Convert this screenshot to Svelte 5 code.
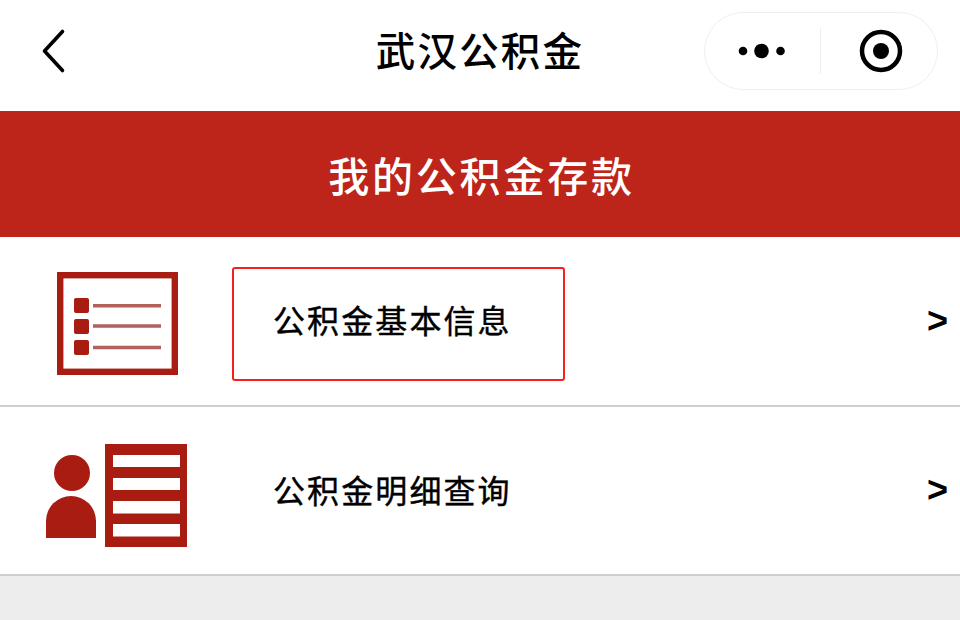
<script>
  const rows = [
    { label: '公积金基本信息', icon: 'list', outlined: true },
    { label: '公积金明细查询', icon: 'person', outlined: false }
  ];
</script>

<div class="page">
  <header class="nav">
    <svg class="back" width="30" height="48" viewBox="0 0 30 48">
      <path d="M23.5 4.5 L5.5 24 L23.5 43.5" fill="none" stroke="#000" stroke-width="3.6" stroke-linecap="round" stroke-linejoin="round" />
    </svg>
    <h1>武汉公积金</h1>
    <div class="capsule">
      <svg class="dots" width="48" height="20" viewBox="0 0 48 20">
        <circle cx="5" cy="10" r="4.3" />
        <circle cx="23.5" cy="10" r="7.3" />
        <circle cx="42.5" cy="10" r="4.3" />
      </svg>
      <span class="divider"></span>
      <svg width="44" height="44" viewBox="0 0 44 44">
        <circle cx="22" cy="22" r="19" fill="none" stroke="#000" stroke-width="4.5" />
        <circle cx="22" cy="22" r="8" />
      </svg>
    </div>
  </header>

  <div class="banner">我的公积金存款</div>

  {#each rows as row}
    <div class="row">
      <div class="icon {row.icon}">
        {#if row.icon === 'list'}
          <svg width="122" height="104" viewBox="0 0 122 104">
            <rect x="3.2" y="3.2" width="114.6" height="96.6" fill="none" stroke="#a81c12" stroke-width="6.4" />
            <rect x="17" y="26" width="15" height="15" rx="2" fill="#a81c12" />
            <rect x="17" y="47" width="15" height="15" rx="2" fill="#a81c12" />
            <rect x="17" y="68" width="15" height="15" rx="2" fill="#a81c12" />
            <path d="M36 33.7 H104 M36 54 H104 M36 75.5 H104" stroke="#b4605c" stroke-width="3.5" />
          </svg>
        {:else}
          <svg width="142" height="103" viewBox="0 0 142 103">
            <circle cx="26" cy="29" r="18" fill="#a81c12" />
            <path d="M0 94 V77 A25 25 0 0 1 50 77 V94 Z" fill="#a81c12" />
            <rect x="59" y="0" width="82" height="103" fill="#a81c12" />
            <rect x="67" y="11" width="67" height="12" fill="#fff" />
            <rect x="67" y="34" width="67" height="12" fill="#fff" />
            <rect x="67" y="57" width="67" height="12.5" fill="#fff" />
            <rect x="67" y="80" width="67" height="12.5" fill="#fff" />
          </svg>
        {/if}
      </div>
      <div class="label" class:outlined={row.outlined}>{row.label}</div>
      <span class="arrow">&gt;</span>
    </div>
  {/each}
</div>

<style>
  :global(body) {
    margin: 0;
    background: #ededed;
  }

  .page {
    height: 620px;
    overflow: hidden;
    font-family: "Liberation Sans", "Noto Sans CJK SC", sans-serif;
    color: #000;
  }

  .nav {
    height: 111px;
    background: #fff;
    display: flex;
    align-items: center;
    position: relative;
    padding: 0 22px 10px 39px;
    box-sizing: border-box;
    justify-content: space-between;
  }

  h1 {
    position: absolute;
    left: 0;
    right: 0;
    top: 29px;
    margin: 0;
    text-align: center;
    font-size: 39.5px;
    line-height: 46px;
    font-weight: 500;
    letter-spacing: 2.2px;
  }

  .capsule {
    width: 234px;
    height: 78px;
    box-sizing: border-box;
    border: 1px solid #efefef;
    border-radius: 39px;
    display: flex;
    align-items: center;
    padding-left: 33px;
  }

  .divider {
    width: 1px;
    height: 46px;
    background: #eee;
    margin: 0 38px 0 34px;
  }

  .banner {
    height: 126px;
    background: #bd241a;
    color: #fff;
    display: flex;
    align-items: center;
    justify-content: center;
    font-size: 41px;
    font-weight: 500;
    letter-spacing: 2.8px;
    padding-left: 3px;
  }

  .row {
    height: 167.5px;
    background: #fff;
    border-bottom: 2px solid #cfcfcf;
    display: flex;
    align-items: center;
    padding-left: 46px;
    position: relative;
  }

  .icon {
    width: 186px;
    box-sizing: border-box;
    display: flex;
  }

  .icon.list {
    padding-left: 11px;
    margin-top: 6px;
  }

  .icon.person {
    margin-top: 11px;
  }

  .label {
    width: 333px;
    height: 114px;
    box-sizing: border-box;
    padding: 0 0 10px 39px;
    margin-top: 7px;
    display: flex;
    align-items: center;
    font-size: 32px;
    font-weight: 400;
    letter-spacing: 2.1px;
    -webkit-text-stroke: 0.4px #000;
    border: 2px solid transparent;
    border-radius: 3px;
  }

  .outlined {
    border-color: #f5211b;
  }

  .arrow {
    position: absolute;
    right: 12px;
    font-size: 36px;
    font-weight: 700;
  }
</style>
